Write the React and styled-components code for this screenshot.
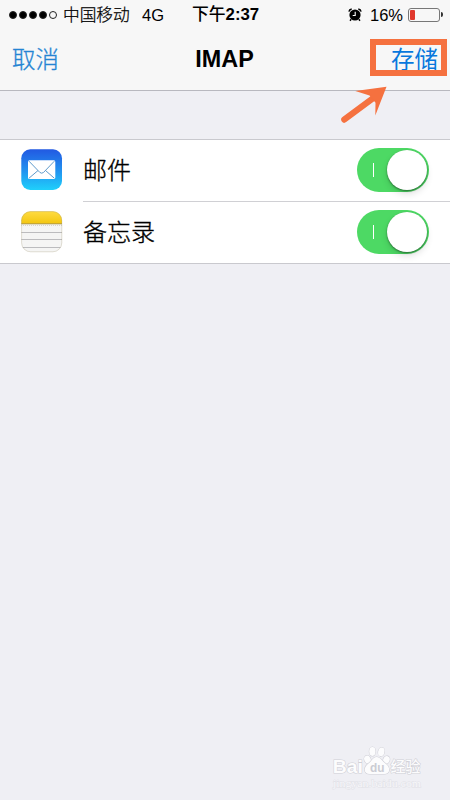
import React, {useState} from 'react';
import styled, {createGlobalStyle} from 'styled-components';

const services = [
  {id: 'mail', label: '邮件'},
  {id: 'notes', label: '备忘录'},
];

const MailIcon = () => (
  <svg width='42' height='42' viewBox='0 0 42 42'>
    <defs>
      <linearGradient id='mailBg' x1='0' y1='0' x2='0' y2='1'>
        <stop offset='0' stopColor='#2259e2' />
        <stop offset='0.55' stopColor='#2295f0' />
        <stop offset='1' stopColor='#1fd0fb' />
      </linearGradient>
    </defs>
    <rect x='0.3' y='0.3' width='40.7' height='40.7' rx='9' fill='url(#mailBg)' />
    <rect x='7' y='11.3' width='27.3' height='18.7' rx='1.5' fill='#fff' />
    <path d='M8 12.2L18.8 23.4Q20.7 25 22.6 23.4L33.3 12.2M8 29.2L17 21.5M33.3 29.2L24.5 21.5' fill='none' stroke='#5f9bcc' strokeWidth='1' />
  </svg>
);

const NotesIcon = () => (
  <svg width='42' height='42' viewBox='0 0 42 42'>
    <defs>
      <linearGradient id='notesTop' x1='0' y1='0' x2='0' y2='1'>
        <stop offset='0' stopColor='#ffdc43' />
        <stop offset='1' stopColor='#f3c60e' />
      </linearGradient>
      <clipPath id='notesClip'>
        <rect x='0.3' y='0.3' width='40.7' height='40.7' rx='9' />
      </clipPath>
    </defs>
    <g clipPath='url(#notesClip)'>
      <rect width='42' height='42' fill='#f5f5f4' />
      <rect width='42' height='13' fill='url(#notesTop)' />
      <path d='M0 12.8H42' stroke='#b39a43' strokeWidth='1' />
      <path d='M0 14.4H42' stroke='#d5d2c8' strokeWidth='1' strokeDasharray='1 1' />
      <path d='M0 21.5H42M0 28.5H42M0 36.5H42' stroke='#bcbcbe' strokeWidth='1' />
    </g>
    <rect x='0.6' y='0.6' width='40.2' height='40.2' rx='9' fill='none' stroke='#a49c78' strokeOpacity='0.5' strokeWidth='0.6' />
  </svg>
);

const AlarmIcon = () => (
  <svg width='14' height='14' viewBox='0 0 14 14'>
    <circle cx='7' cy='7' r='5.6' fill='#000' />
    <path d='M0.9 3.7Q1.3 1.4 3.7 1M13.1 3.7Q12.7 1.4 10.3 1M3.2 11.3L2 12.8M10.8 11.3L12 12.8' fill='none' stroke='#000' strokeWidth='1.4' />
    <path d='M7.2 3.8V7.5H4.7' fill='none' stroke='#fff' strokeWidth='1.1' />
  </svg>
);

const Watermark = () => (
  <WatermarkSvg width='94' height='48' viewBox='0 0 94 48'>
    <g fill='#fcfcfd' stroke='#cfcfd6' strokeWidth='1.1' paintOrder='stroke'>
      <text x='1.8' y='28.6' fontSize='19' fontWeight='700' textLength='30' lengthAdjust='spacingAndGlyphs'>Bai</text>
      <ellipse cx='36.5' cy='15.5' rx='3.2' ry='4' transform='rotate(-20 36.5 15.5)' />
      <ellipse cx='41.4' cy='7.5' rx='3.1' ry='4.4' />
      <ellipse cx='50.3' cy='7.8' rx='3.1' ry='4.4' transform='rotate(12 50.3 7.8)' />
      <ellipse cx='55.4' cy='15.8' rx='3.2' ry='3.9' transform='rotate(20 55.4 15.8)' />
      <path d='M45.5 13C42 13 41 17 37.5 19.5C32 23.5 32.5 30 39 30H53C59 30 60 24 55 20C51 17 49.5 13 45.5 13Z' />
      <text x='59.5' y='28' fontSize='15' fontWeight='500' textLength='30'>经验</text>
    </g>
    <text x='39' y='28' fontSize='13' fontWeight='700' fill='#cbccd3' textLength='14.5' lengthAdjust='spacingAndGlyphs'>du</text>
    <text x='2' y='42.8' fontSize='10' fontFamily='"Liberation Serif", serif' fill='#f7f7fa' stroke='#e0e0e6' strokeWidth='0.8' paintOrder='stroke' textLength='88' lengthAdjust='spacingAndGlyphs'>jingyan.baidu.com</text>
  </WatermarkSvg>
);

const App = () => {
  const [enabled, setEnabled] = useState({mail: true, notes: true});

  const toggleHandler = (id) => {
    setEnabled({...enabled, [id]: !enabled[id]});
  }

  return (
    <>
      <GlobalStyle />
      <Screen>
        <Header>
          <StatusBar>
            <Signal>
              <Dot $filled /><Dot $filled /><Dot $filled /><Dot $filled /><Dot />
            </Signal>
            <Carrier>中国移动</Carrier>
            <Network>4G</Network>
            <Clock>下午<b>2:37</b></Clock>
            <AlarmIcon />
            <Percent>16%</Percent>
            <Battery><Charge /></Battery>
            <BatteryTip />
          </StatusBar>
          <NavBar>
            <NavButton>取消</NavButton>
            <Title>IMAP</Title>
            <NavButton $save>存储</NavButton>
          </NavBar>
        </Header>
        <List>
          {services.map(({id, label}) => (
            <Row key={id}>
              {id === 'mail' ? <MailIcon /> : <NotesIcon />}
              <RowBody>
                <Label>{label}</Label>
                <Toggle role='switch' aria-checked={enabled[id]} $on={enabled[id]} onClick={() => toggleHandler(id)}>
                  <Bar />
                  <Knob />
                </Toggle>
              </RowBody>
            </Row>
          ))}
        </List>
        <Highlight />
        <Arrow width='50' height='42' viewBox='0 0 50 42'>
          <path d='M6.3 34.6L36 12.5' stroke='#f5713f' strokeWidth='6.2' strokeLinecap='round' />
          <path d='M48.5 1.8L17.3 6L31.5 10.5L37.5 17.8L37.3 30.5Z' fill='#f5713f' />
        </Arrow>
        <Watermark />
      </Screen>
    </>
  )
}

const GlobalStyle = createGlobalStyle`
  *{
    box-sizing:border-box;
  }
  body{
    margin:0;
    font-family:'Liberation Sans', 'Noto Sans CJK SC', sans-serif;
    color:#000;
  }
`
const Screen = styled.div`
  position:relative;
  width:450px;
  height:800px;
  overflow:hidden;
  background:#efeff4;
`
const Header = styled.header`
  height:91px;
  background:#f7f7f7;
  border-bottom:1px solid #b8b8bf;
`
const StatusBar = styled.div`
  display:flex;
  align-items:center;
  height:29px;
  padding-left:9px;
  font-size:17px;
  line-height:30px;
  white-space:nowrap;
`
const Signal = styled.div`
  display:flex;
  gap:2px;
  width:54px;
`
const Dot = styled.span`
  width:8px;
  height:8px;
  border:1px solid #222;
  border-radius:50%;
  background:${({$filled}) => $filled ? '#000' : 'transparent'};
`
const Carrier = styled.span`
  width:79px;
  padding-top:2px;
  font-size:16.7px;
  font-weight:300;
  -webkit-text-stroke:0.25px;
`
const Network = styled.span`
  width:50px;
  font-size:16.5px;
`
const Clock = styled.span`
  width:156px;
  padding-top:1px;
  font-size:16.8px;
  font-weight:500;
`
const Percent = styled.span`
  width:38px;
  margin-left:8px;
  font-size:16.5px;
`
const Battery = styled.span`
  width:32px;
  height:14px;
  padding:1px;
  border:1px solid #777;
  border-radius:3px;
`
const Charge = styled.span`
  display:block;
  width:5px;
  height:10px;
  border-radius:1px;
  background:#e0382d;
`
const BatteryTip = styled.span`
  width:2px;
  height:5px;
  margin-left:1px;
  border-radius:0 2px 2px 0;
  background:#333;
`
const NavBar = styled.nav`
  display:grid;
  grid-template-columns:1fr auto 1fr;
  align-items:center;
  height:61px;
  padding:0 12px;
`
const NavButton = styled.button`
  justify-self:${({$save}) => $save ? 'end' : 'start'};
  padding:0;
  border:0;
  background:none;
  color:${({$save}) => $save ? '#0878dd' : '#2584d3'};
  font-family:inherit;
  font-size:23.5px;
  font-weight:${({$save}) => $save ? 400 : 300};
  line-height:30px;
  -webkit-text-stroke:${({$save}) => $save ? 0 : '0.3px'};
`
const Title = styled.h1`
  margin:0 1px 1px 0;
  font-size:23.4px;
  font-weight:700;
  line-height:30px;
`
const List = styled.div`
  margin-top:48px;
  border:solid #c9c9ce;
  border-width:1px 0;
  background:#fff;
`
const Row = styled.div`
  display:flex;
  height:61px;
  padding-left:21px;
  > svg{
    flex:none;
    margin-top:9px;
  }
  &:last-child{
    height:62px;
  }
  &:last-child > svg{
    margin-top:10px;
  }
  &:not(:first-child) > div{
    border-top:1px solid #d0d0d4;
  }
`
const RowBody = styled.div`
  display:flex;
  flex:1;
  align-items:flex-start;
  justify-content:space-between;
  margin-left:20px;
  padding:8px 21px 0 0;
`
const Label = styled.span`
  margin-top:8px;
  font-size:24px;
  font-weight:300;
  line-height:30px;
  -webkit-text-stroke:0.35px;
`
const Toggle = styled.button`
  display:flex;
  flex-direction:${({$on}) => $on ? 'row' : 'row-reverse'};
  align-items:center;
  justify-content:space-between;
  width:72px;
  height:44px;
  padding:2px 2px 2px 16px;
  border:0;
  border-radius:22px;
  background:${({$on}) => $on ? '#4dd964' : '#e5e5ea'};
`
const Bar = styled.span`
  width:1px;
  height:14px;
  background:#fff;
`
const Knob = styled.span`
  width:40px;
  height:40px;
  border-radius:50%;
  background:#fff;
  box-shadow:0 1px 2px rgba(0,0,0,0.45), 0 4px 7px rgba(0,0,0,0.12);
`
const Highlight = styled.div`
  position:absolute;
  top:39px;
  left:370px;
  width:77px;
  height:37px;
  border:6px solid #f5713f;
  pointer-events:none;
`
const Arrow = styled.svg`
  position:absolute;
  top:85px;
  left:338px;
  pointer-events:none;
`
const WatermarkSvg = styled.svg`
  position:absolute;
  top:744px;
  left:331px;
  font-family:'Liberation Sans', 'Noto Sans CJK SC', sans-serif;
`
export default App
